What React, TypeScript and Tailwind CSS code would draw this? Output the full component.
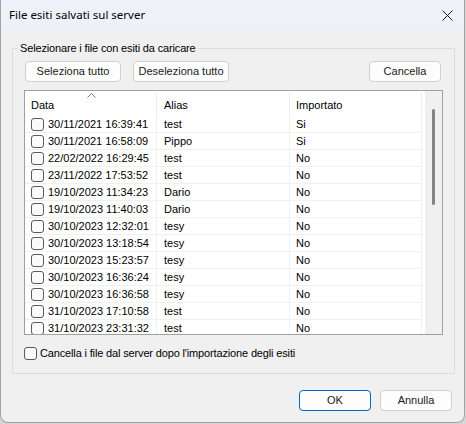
import React from "react";

const rows: [string, string, string][] = [
  ["30/11/2021 16:39:41", "test", "Si"],
  ["30/11/2021 16:58:09", "Pippo", "Si"],
  ["22/02/2022 16:29:45", "test", "No"],
  ["23/11/2022 17:53:52", "test", "No"],
  ["19/10/2023 11:34:23", "Dario", "No"],
  ["19/10/2023 11:40:03", "Dario", "No"],
  ["30/10/2023 12:32:01", "tesy", "No"],
  ["30/10/2023 13:18:54", "tesy", "No"],
  ["30/10/2023 15:23:57", "tesy", "No"],
  ["30/10/2023 16:36:24", "tesy", "No"],
  ["30/10/2023 16:36:58", "tesy", "No"],
  ["31/10/2023 17:10:58", "test", "No"],
  ["31/10/2023 23:31:32", "test", "No"],
];

function Box() {
  return <span className="inline-block w-[13px] h-[13px] shrink-0 rounded-[3px] border border-[#5a5a5a] bg-[#fbfbfb]" />;
}

function Btn({ label, width, primary }: { label: string; width: string; primary?: boolean }) {
  return (
    <button
      className={`${width} h-[21px] rounded-[4px] border bg-[#fdfdfd] text-[11px] leading-none text-[#1a1a1a] ${
        primary ? "border-[#0067c0]" : "border-[#d0d0d0]"
      }`}
    >
      {label}
    </button>
  );
}

export default function App() {
  const title = { fontFamily: '"Noto Sans", "Open Sans", sans-serif' };
  const ui = { fontFamily: '"Liberation Sans", Arial, sans-serif' };

  return (
    <div className="w-[466px] h-[424px] bg-[#d6d6d6]" style={ui}>
      <div className="w-[465px] h-[423px] flex flex-col bg-[#f0f0f0] border border-t-0 border-[#a3a3a3] rounded-b-[8px] overflow-hidden">
        {/* title bar */}
        <div className="h-[30px] shrink-0 flex items-center justify-between bg-[#eef2f8] pl-[8px] pr-[9px]">
          <span className="text-[11.5px] text-black" style={title}>File esiti salvati sul server</span>
          <svg width="11" height="11" viewBox="0 0 11 11" className="mr-[2px]">
            <path d="M0.5 0.5 L10.5 10.5 M10.5 0.5 L0.5 10.5" stroke="#1a1a1a" strokeWidth="1" />
          </svg>
        </div>

        <div className="pl-[11px] pr-[9px]">
          <fieldset className="mt-[10px] w-[443px] border border-[#dcdcdc] rounded-[1px] px-[11px] pb-[13px]">
            <legend className="-ml-[6px] px-[2px] text-[11px] leading-[16px] tracking-[-0.15px] text-black">
              Selezionare i file con esiti da caricare
            </legend>

            <div className="mt-[5px] flex items-center gap-[12px] pl-[1px] pr-[2px]">
              <Btn label="Seleziona tutto" width="w-[96px]" />
              <Btn label="Deseleziona tutto" width="w-[96px]" />
              <div className="flex-1" />
              <Btn label="Cancella" width="w-[72px]" />
            </div>

            {/* list view */}
            <div className="mt-[8px] h-[245px] border border-[#a0a0a0] bg-white flex overflow-hidden">
              <div className="w-[397px] flex flex-col">
                <div className="h-[25px] shrink-0 flex text-[11px] text-black">
                  <div className="relative w-[132px] border-r border-[#ececec] mt-[2px] pt-[2px] pl-[6px] flex items-center">
                    Data
                    <svg width="9" height="5" viewBox="0 0 9 5" className="absolute left-[62px] top-[0px]">
                      <path d="M0.5 4.5 L4.5 0.5 L8.5 4.5" stroke="#777" strokeWidth="1" fill="none" />
                    </svg>
                  </div>
                  <div className="w-[133px] border-r border-[#ececec] mt-[2px] pt-[2px] pl-[7px] flex items-center">Alias</div>
                  <div className="w-[132px] border-r border-[#ececec] mt-[2px] pt-[2px] pl-[6px] flex items-center">Importato</div>
                </div>
                {rows.map(([d, a, i]) => (
                  <div key={d} className="h-[17px] shrink-0 flex text-[11px] text-black border-b border-[#f0f0f0]">
                    <div className="w-[132px] border-r border-[#f0f0f0] pl-[6px] flex items-center gap-[4px]">
                      <Box />
                      <span className="pt-[1px]">{d}</span>
                    </div>
                    <div className="w-[133px] border-r border-[#f0f0f0] pl-[7px] pt-[1px] flex items-center">{a}</div>
                    <div className="w-[132px] border-r border-[#f0f0f0] pl-[6px] pt-[1px] flex items-center">{i}</div>
                  </div>
                ))}
              </div>
              <div className="w-[3px]" />
              <div className="flex-1 bg-[#f0f0f0] pt-[18px] flex justify-center pr-[1px]">
                <div className="w-[3px] h-[96px] rounded-full bg-[#858585]" />
              </div>
            </div>

            <label className="mt-[12px] flex items-center gap-[3px] text-[11px] leading-[13px] tracking-[-0.15px] text-black">
              <Box />
              <span>Cancella i file dal server dopo l'importazione degli esiti</span>
            </label>
          </fieldset>

          <div className="mt-[16px] flex justify-end gap-[9px] pr-[3px]">
            <Btn label="OK" width="w-[72px]" primary />
            <Btn label="Annulla" width="w-[72px]" />
          </div>
        </div>
      </div>
    </div>
  );
}
